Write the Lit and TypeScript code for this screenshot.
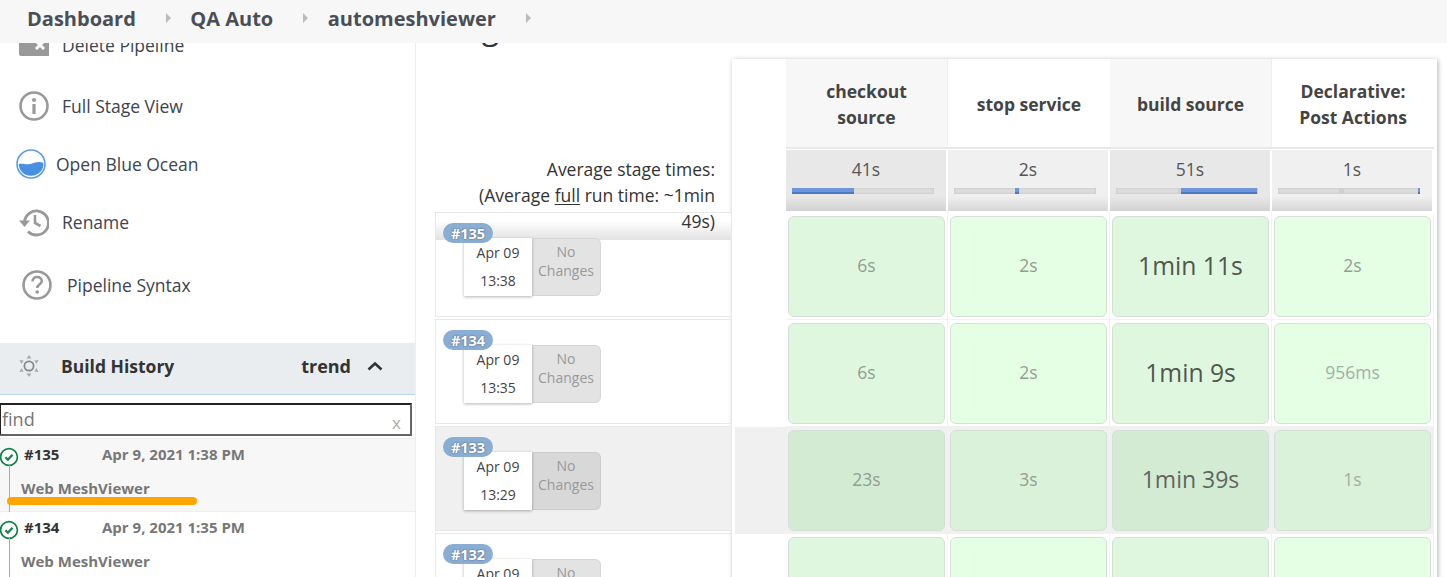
import { LitElement, html, css, svg } from "lit";
import { customElement } from "lit/decorators.js";

interface Seg { from: number; to: number; mark: number; }
const stages: { name: string[]; avg: string; bar: Seg }[] = [
  { name: ["checkout", "source"], avg: "41s", bar: { from: 0, to: 44, mark: 0 } },
  { name: ["stop service"], avg: "2s", bar: { from: 43, to: 46, mark: 43 } },
  { name: ["build source"], avg: "51s", bar: { from: 46, to: 99, mark: 44 } },
  { name: ["Declarative:", "Post Actions"], avg: "1s", bar: { from: 98.5, to: 100, mark: 43 } },
];

const builds = [
  { id: "#135", date: "Apr 09", time: "13:38", cells: ["6s", "2s", "1min 11s", "2s"], first: true },
  { id: "#134", date: "Apr 09", time: "13:35", cells: ["6s", "2s", "1min 9s", "956ms"] },
  { id: "#133", date: "Apr 09", time: "13:29", cells: ["23s", "3s", "1min 39s", "1s"], hl: true },
  { id: "#132", date: "Apr 09", time: "13:26", cells: ["", "", "", ""] },
];

const check = svg`<svg class="st" viewBox="0 0 20 20" width="20" height="20"><circle cx="10" cy="10" r="8.400" fill="#fff" stroke="#138347" stroke-width="1.700"/><path d="M6.400 10.200l2.500 2.500 4.600-5" fill="none" stroke="#138347" stroke-width="2.300"/></svg>`;

@customElement("app-root")
export class AppRoot extends LitElement {
  static styles = css`
    :host { display: block; position: relative; height: 577px; overflow: hidden; background: #fff; font-family: "Open Sans", "Noto Sans", sans-serif; color: #333; }
    .crumbs { position: absolute; z-index: 5; left: 0; right: 0; top: 0; height: 43px; background: #f7f7f7; display: flex; align-items: center; padding-left: 27px; font-size: 20px; font-weight: 700; color: #4a4f57; padding-bottom: 7px; box-sizing: border-box; }
    .crumbs .tri { width: 0; height: 0; border-left: 5px solid #bbb; border-top: 5px solid transparent; border-bottom: 5px solid transparent; margin: 0 19.500px 0 30px; }
    .body { display: flex; height: 577px; }
    .side { width: 416px; flex: none; box-sizing: border-box; border-right: 1px solid #eee; padding-top: 16px; position: relative; }
    .task { display: flex; align-items: center; height: 58px; font-size: 17.500px; color: #3d4450; padding-left: 19px; gap: 13px; }
    .task svg { flex: none; }
    .task.gap { margin-top: 3px; }
    .task.ocean { padding-left: 16px; gap: 10px; }
    .task.syntax { padding-left: 22px; gap: 15px; margin-top: 5px; }
    .bh { margin-top: 29px; height: 52px; box-sizing: border-box; background: #e9edf0; border-bottom: 1px solid #b8d8f5; display: flex; align-items: center; padding: 0 32px 5px 19px; font-weight: 700; font-size: 17.500px; color: #333; }
    .bh .t { margin-left: 22px; flex: 1; }
    .bh .tr { margin-right: 16px; font-size: 18px; }
    .find { margin: 8px 3px 2px -1px; height: 33px; box-sizing: border-box; border: 2px solid; border-color: #222 #666 #666 #222; display: flex; align-items: center; justify-content: space-between; padding: 0 9px 2px 1px; font-size: 18px; color: #757575; background: #fff; }
    .find .x { font-size: 17px; color: #aaa; padding-top: 8px; }
    .item { position: relative; height: 74px; box-sizing: border-box; border-bottom: 1px solid #eee; padding: 5px 0 0 24px; font-weight: 700; font-size: 15px; color: #777; line-height: 20px; }
    .item.sel { background: #f7f7f7; border-top: 1px solid #eee; }
    .item .st { position: absolute; left: -1px; top: 8px; }
    .item .ln { position: absolute; left: 9px; top: 26px; bottom: -1px; width: 1px; background: #aaa; }
    .item .r1 { display: flex; }
    .item .num { width: 78px; color: #333; }
    .item .r2 { margin: 14px 0 0 -3px; }
    .orange { position: absolute; left: 7px; top: 58px; width: 190px; height: 8px; border-radius: 4px; background: #ffa500; }

    .main { flex: 1; padding-left: 19px; min-width: 0; }
    h2 { margin: 0 0 6px; font-size: 32px; font-weight: 400; line-height: 53px; color: #333; white-space: nowrap; }
    .stage { display: flex; }
    .left { width: 297px; flex: none; }
    .avg { height: 153px; box-sizing: border-box; padding: 97px 17px 0 0; }
    .avg div { position: relative; z-index: 2; width: 262px; margin-left: auto; text-align: right; font-size: 17.500px; line-height: 26px; color: #333; }
    .avg u { text-underline-offset: 2px; }
    .b { height: 105px; box-sizing: border-box; border: 1px solid #e8e8e8; margin-bottom: 2px; position: relative; }
    .b.hl { background: #f0f0f0; }
    .b.first::before { content: ""; position: absolute; left: 0; right: 0; top: 0; height: 27px; background: linear-gradient(#fff, #fff 30%, #e2e2e2); }
    .badge { position: absolute; z-index: 2; left: 7px; top: 10px; width: 50px; height: 20px; border-radius: 10px; background: #8aaed3; color: #fff; font-weight: 700; font-size: 14.500px; line-height: 21px; text-align: center; text-shadow: 0 0 2px #456; }
    .card { position: absolute; left: 28px; top: 25px; display: flex; height: 58px; }
    .dt { width: 68px; background: #fff; box-shadow: 0 1px 3px rgba(0,0,0,.3); text-align: center; font-size: 14px; line-height: 28px; color: #444; z-index: 1; padding-top: 1px; box-sizing: border-box; }
    .nc { width: 69px; box-sizing: border-box; background: #e3e3e3; border: 1px solid #d6d6d6; border-left: none; border-radius: 0 6px 6px 0; text-align: center; font-size: 14px; line-height: 19px; color: #999; padding-top: 3px; }
    .b.hl .nc { background: #d8d8d8; border-color: #ccc; }

    .tbl { width: 705px; flex: none; box-shadow: 1px 1px 5px rgba(0,0,0,.3); display: grid; grid-template-columns: 54px repeat(4, 162px); grid-auto-rows: 107px; grid-template-rows: 90px 64px; height: 560px; background: #fff; align-content: start; padding-right: 3px; box-sizing: border-box; }
    .hd { display: flex; flex-direction: column; align-items: center; justify-content: center; font-weight: 700; font-size: 17.500px; line-height: 26px; color: #444; border-bottom: 2px solid #e8e8e8; box-sizing: border-box; text-align: center; padding-top: 2px; }
    .hd.alt { background: #f7f7f7; border-right: 1px solid #eee; }
    .sum { position: relative; background: linear-gradient(#f0f0f0 0, #f0f0f0 76%, #d6d6d6 100%); margin: 1px 2px 2px 0; font-size: 17.500px; text-align: center; color: #555; line-height: 24px; padding-top: 7px; box-sizing: border-box; }
    .sum.alt { background: linear-gradient(#e8e8e8 0, #e8e8e8 76%, #d2d2d2 100%); }
    .bar { position: absolute; left: 6px; top: 38px; width: 142px; height: 6px; background: #dcdcdc; box-shadow: inset 0 0 2px #b5b5b5; }
    .bar i { position: absolute; top: 0; bottom: 0; background: #6d96da; border-bottom: 2px solid #4f78c4; box-sizing: border-box; }
    .bar b { position: absolute; top: 0; bottom: 0; width: 5px; background: #cfcfcf; }
    .spc.hl { background: #f0f0f0; margin-left: 3px; }
    .slot { padding: 3px 2px 2px 2px; box-sizing: border-box; border-right: 1px solid #f2f2f2; border-bottom: 1px solid #f2f2f2; }
    .slot.hl { background: #f0f0f0; }
    .cell { height: 100%; box-sizing: border-box; border: 1px solid #d5dfd5; border-radius: 6px; background: #e5ffe5; display: flex; align-items: center; justify-content: center; font-size: 17.500px; color: #939e93; padding-bottom: 3px; }
    .alt .cell { background: #dff7df; }
    .slot.hl .cell { background: #d9f2d9; }
    .slot.hl.alt .cell { background: #d3ebd3; }
    .cell.big { font-size: 24.700px; color: #4f574f; }
    .cell.mid { font-size: 23px; color: #5f665f; }
    .cell.faint { color: #a3afa3; }
  `;

  private sizeClass(c: string) {
    if (c === "1min 39s") return "mid";
    if (c === "1s" || c === "956ms") return "faint";
    return c.startsWith("1min") ? "big" : "";
  }

  render() {
    return html`
      <div class="crumbs">
        <span>Dashboard</span><span class="tri"></span>
        <span>QA Auto</span><span class="tri"></span>
        <span>automeshviewer</span><span class="tri"></span>
      </div>
      <div class="body">
        <div class="side">
          <div class="task">
            <svg width="30" height="26" viewBox="0 0 30 26"><path d="M0 2a2 2 0 0 1 2-2h26a2 2 0 0 1 2 2v22H2a2 2 0 0 1-2-2z" fill="#999"/><path d="M17 9l8 8M25 9l-8 8" stroke="#fff" stroke-width="3"/></svg>
            <span>Delete Pipeline</span>
          </div>
          <div class="task gap">
            <svg width="30" height="30" viewBox="0 0 30 30"><circle cx="15" cy="15" r="13.500" fill="none" stroke="#999" stroke-width="2.600"/><circle cx="15" cy="9" r="2" fill="#999"/><rect x="13.400" y="13" width="3.200" height="10" fill="#999"/></svg>
            <span>Full Stage View</span>
          </div>
          <div class="task ocean">
            <svg width="30" height="30" viewBox="0 0 30 30"><circle cx="15" cy="15" r="14" fill="#fff" stroke="#5a9ee8" stroke-width="1.600"/><path d="M2.700 15c4-1 6 .5 10 .2 4.500-.4 8-3.600 14.600-1.400 1 7.500-5 13-12.300 13C8 27 2.800 21.500 2.700 15z" fill="#4a90e2"/></svg>
            <span>Open Blue Ocean</span>
          </div>
          <div class="task">
            <svg width="30" height="30" viewBox="0 0 30 30"><path d="M5.500 15A12 12 0 1 1 9 24.500" fill="none" stroke="#999" stroke-width="2.800"/><path d="M0 13.500h11L5.500 20z" fill="#999"/><path d="M16 8v8l5.500 3" fill="none" stroke="#999" stroke-width="2.600"/></svg>
            <span>Rename</span>
          </div>
          <div class="task syntax">
            <svg width="30" height="30" viewBox="0 0 30 30"><circle cx="15" cy="15" r="13.500" fill="none" stroke="#999" stroke-width="2.600"/><path d="M10.500 11.500c0-3 2.200-4.500 4.700-4.500s4.600 1.700 4.600 4c0 3.500-4.600 3.600-4.600 7" fill="none" stroke="#999" stroke-width="2.600"/><circle cx="15.200" cy="22" r="1.800" fill="#999"/></svg>
            <span>Pipeline Syntax</span>
          </div>
          <div class="bh">
            <svg width="20" height="22" viewBox="0 0 20 22"><circle cx="10" cy="11" r="4.600" fill="none" stroke="#888" stroke-width="1.800"/><path d="M10 0l2.500 3.500h-5zM10 22l-2.500-3.500h5zM.5 5l4.200.5-2.200 3.500zM19.500 5l-4.200.5 2.200 3.500zM.5 17l4.200-.5-2.200-3.500zM19.500 17l-4.200-.5 2.200-3.500z" fill="#aaa"/></svg>
            <span class="t">Build History</span>
            <span class="tr">trend</span>
            <svg width="16" height="10" viewBox="0 0 16 10"><path d="M1.500 8.500L8 2.500l6.500 6" fill="none" stroke="#333" stroke-width="2.600"/></svg>
          </div>
          <div class="find"><span>find</span><span class="x">x</span></div>
          <div class="item sel">
            ${check}<span class="ln"></span>
            <div class="r1"><span class="num">#135</span><span>Apr 9, 2021 1:38 PM</span></div>
            <div class="r2">Web MeshViewer</div>
            <div class="orange"></div>
          </div>
          <div class="item">
            ${check}<span class="ln"></span>
            <div class="r1"><span class="num">#134</span><span>Apr 9, 2021 1:35 PM</span></div>
            <div class="r2">Web MeshViewer</div>
          </div>
        </div>
        <div class="main">
          <h2>Stage View</h2>
          <div class="stage">
            <div class="left">
              <div class="avg"><div>Average stage times:<br />(Average <u>full</u> run time: ~1min 49s)</div></div>
              ${builds.map(
                (b) => html`<div class="b ${b.first ? "first" : ""} ${b.hl ? "hl" : ""}">
                  <div class="badge">${b.id}</div>
                  <div class="card">
                    <div class="dt">${b.date}<br />${b.time}</div>
                    <div class="nc">No<br />Changes</div>
                  </div>
                </div>`
              )}
            </div>
            <div class="tbl">
              <div></div>
              ${stages.map(
                (s, i) => html`<div class="hd ${i % 2 === 0 ? "alt" : ""}">${s.name.map((n) => html`<span>${n}</span>`)}</div>`
              )}
              <div></div>
              ${stages.map(
                (s, i) => html`<div class="sum ${i % 2 === 0 ? "alt" : ""}">
                  ${s.avg}
                  <div class="bar">
                    <b style="left:${s.bar.mark}%"></b>
                    <i style="left:${s.bar.from}%;width:${s.bar.to - s.bar.from}%"></i>
                  </div>
                </div>`
              )}
              ${builds.map(
                (b) => html`<div class="spc ${b.hl ? "hl" : ""}"></div>
                  ${b.cells.map(
                    (c, i) => html`<div class="slot ${b.hl ? "hl" : ""} ${i % 2 === 0 ? "alt" : ""}">
                      <div class="cell ${this.sizeClass(c)}">${c}</div>
                    </div>`
                  )}`
              )}
            </div>
          </div>
        </div>
      </div>
    `;
  }
}
